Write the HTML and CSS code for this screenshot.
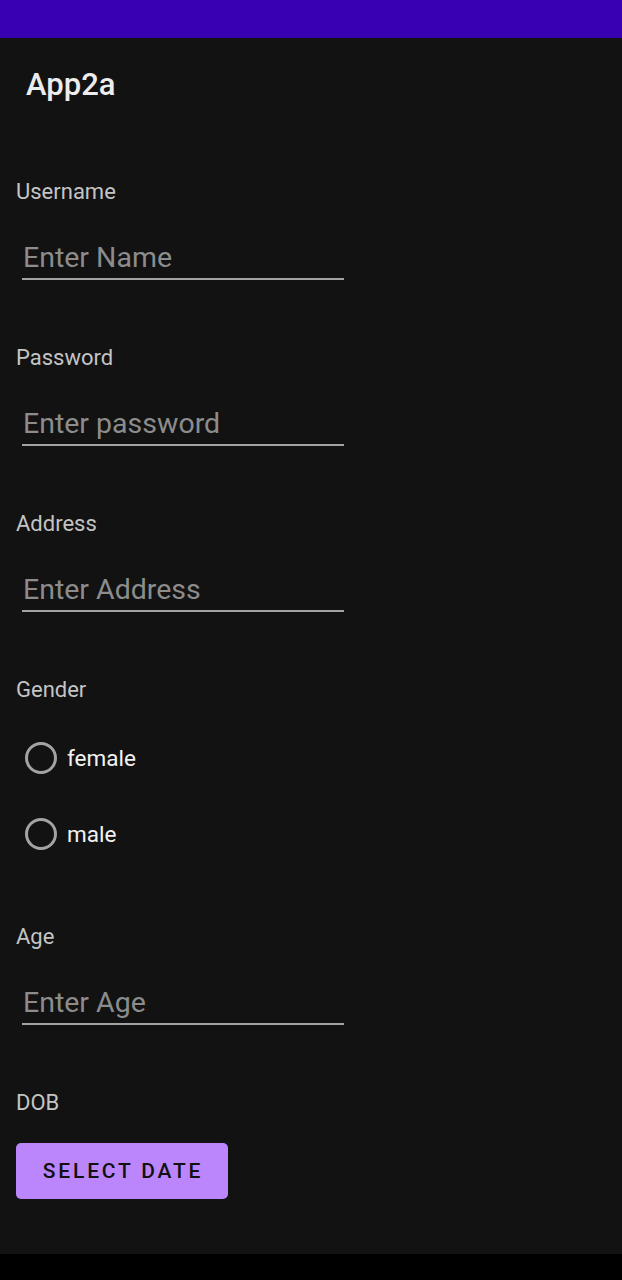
FILE: index.html
```html
<!DOCTYPE html>
<html>
<head>
<meta charset="utf-8">
<link rel="stylesheet" href="styles.css">
</head>
<body>
<div class="screen">
  <div class="status-bar"></div>
  <main class="content">
    <header class="toolbar"><h1 class="title">App2a</h1></header>
    <form class="form">
      <div class="field">
        <label class="label">Username</label>
        <div class="input"><span class="hint">Enter Name</span></div>
      </div>
      <div class="field">
        <label class="label">Password</label>
        <div class="input"><span class="hint">Enter password</span></div>
      </div>
      <div class="field">
        <label class="label">Address</label>
        <div class="input"><span class="hint">Enter Address</span></div>
      </div>
      <div class="field gender">
        <label class="label">Gender</label>
        <div class="radios">
          <div class="radio"><span class="circle"></span><span class="radio-text">female</span></div>
          <div class="radio"><span class="circle"></span><span class="radio-text">male</span></div>
        </div>
      </div>
      <div class="field">
        <label class="label">Age</label>
        <div class="input"><span class="hint">Enter Age</span></div>
      </div>
      <div class="field dob">
        <label class="label">DOB</label>
        <button type="button" class="button">SELECT DATE</button>
      </div>
    </form>
  </main>
  <div class="nav-bar"></div>
</div>
</body>
</html>
```
FILE: styles.css
```css
* { box-sizing: border-box; }
html, body { margin: 0; padding: 0; }
body {
  background: #121212;
  font-family: Roboto, "Noto Sans", "Liberation Sans", sans-serif;
  color: #e6e6e6;
}
.screen {
  width: 622px;
  height: 1280px;
  display: flex;
  flex-direction: column;
  overflow: hidden;
}
.status-bar {
  height: 38px;
  background: #3700b3;
  flex: none;
}
.content {
  flex: 1;
  min-height: 0;
  overflow: hidden;
  background: #121212;
}
.nav-bar {
  height: 26px;
  background: #000;
  flex: none;
}
.toolbar {
  padding: 28px 0 0 26px;
  height: 114px;
}
.title {
  margin: 0;
  font-size: 31px;
  line-height: 38px;
  font-weight: 500;
  color: #ececec;
}
.form {
  padding: 28px 0 0 16px;
  display: flex;
  flex-direction: column;
}
.field {
  display: flex;
  flex-direction: column;
  margin-bottom: 65px;
}
.label {
  font-size: 22px;
  line-height: 24px;
  color: #c4c4c4;
  height: 24px;
}
.input {
  margin: 38px 0 0 6px;
  width: 322px;
  padding: 0 0 5px 1px;
  border-bottom: 2px solid #a3a3a3;
  height: 38px;
}
.hint {
  display: block;
  font-size: 28.5px;
  line-height: 32px;
  color: #8c8c8c;
}
.radios {
  display: flex;
  flex-direction: column;
  margin-top: 40px;
  gap: 44px;
}
.radio {
  display: flex;
  align-items: center;
  height: 32px;
  padding-left: 9px;
}
.circle {
  width: 32px;
  height: 32px;
  border-radius: 50%;
  border: 3px solid #a3a3a3;
  flex: none;
}
.radio-text {
  margin-left: 10px;
  font-size: 22.5px;
  color: #f2f2f2;
}
.gender { margin-bottom: 75px; }
.field:has(+ .gender) { margin-bottom: 66px; }
.field:nth-child(1), .field:nth-child(2) { margin-bottom: 66px; }
.field:nth-child(5) { margin-bottom: 66px; }
.button {
  margin-top: 28px;
  align-self: flex-start;
  width: 212px;
  height: 56px;
  border: none;
  border-radius: 5px;
  background: #bb86fc;
  color: #111;
  font-family: inherit;
  font-size: 21px;
  font-weight: 500;
  letter-spacing: 2.8px;
  padding: 0 0 0 2px;
}
```
